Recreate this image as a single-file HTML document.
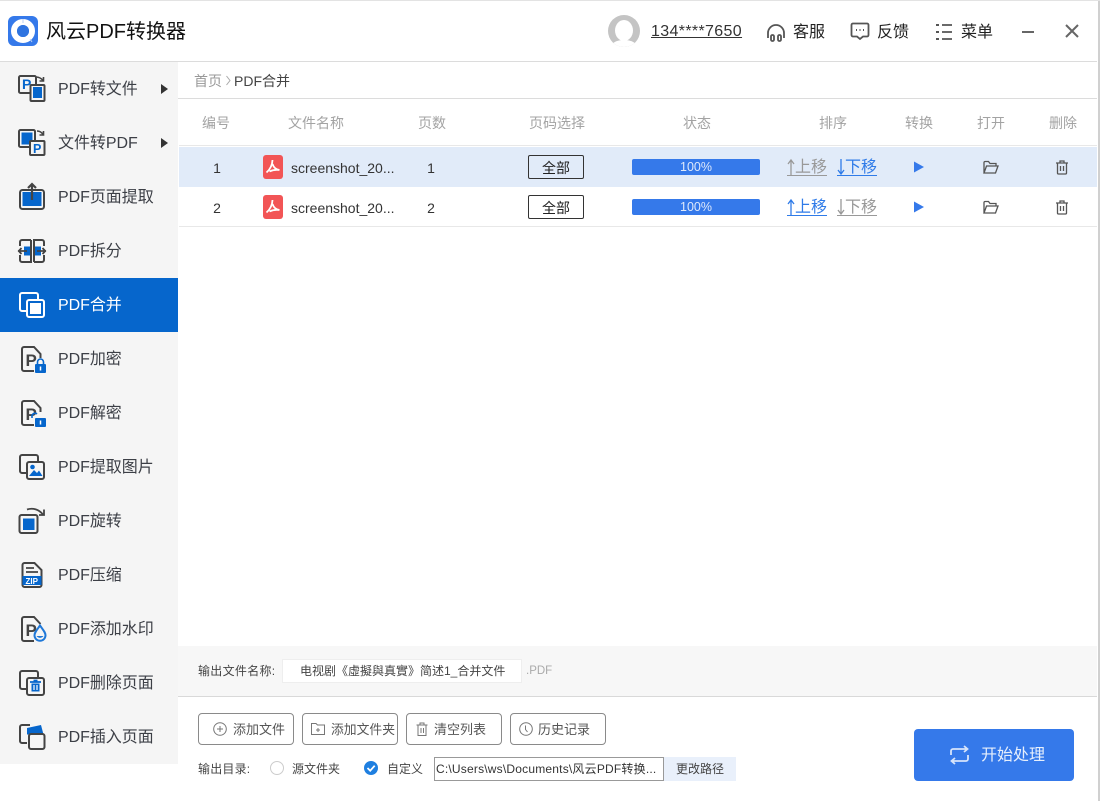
<!DOCTYPE html>
<html lang="zh"><head><meta charset="utf-8"><title>风云PDF转换器</title>
<style>
html,body{margin:0;padding:0;background:#fff}
#app{position:relative;width:1100px;height:801px;overflow:hidden;background:#fff;font-family:"Liberation Sans","Noto Sans CJK SC",sans-serif;color:#333}
.a{position:absolute}
.t{position:absolute;white-space:nowrap;line-height:20px}
.c{text-align:center}
svg{position:absolute;overflow:visible;fill:none}
.si{font-size:16px;color:#3c3f46;left:58px;letter-spacing:-.05px}
.h{font-size:14px;color:#a3a3a3;top:113px;text-align:center}
.mv{font-size:16px}
.gr{color:#999}.bl{color:#2f7be8}
.ul{position:absolute;width:40px;height:1px}
.bgr{background:#999}.bbl{background:#2f7be8}
.bar{position:absolute;left:632px;width:128px;height:16px;background:#3579ea;border-radius:2px;color:#dfe9fb;font-size:12.5px;line-height:17px;text-align:center}
.all{position:absolute;left:528px;width:54px;height:22px;border:1px solid #333;border-radius:2px;font-size:14px;line-height:25px;text-align:center;color:#222}
.btn{position:absolute;top:713px;width:94px;height:30px;border:1px solid #8a8a8a;border-radius:4px}
.bt{font-size:13px;color:#555;top:720px}
</style></head><body><div id="app">

<div class="a" style="left:0;top:0;width:1100px;height:1px;background:#e3e3e3"></div>
<div class="a" style="left:0;top:61px;width:1097px;height:1px;background:#dcdcdc"></div>

<!-- logo -->
<div class="a" style="left:8px;top:16px;width:30px;height:30px;border-radius:6px;background:#3579ea"></div>
<svg style="left:8px;top:16px" width="30" height="30"><circle cx="15" cy="15" r="9" stroke="#fff" stroke-width="6"/><circle cx="15" cy="15" r="6" fill="#2f74e0"/><path d="M15 3v4M22 23l2 3" stroke="#b8d0f6" stroke-width="1"/></svg>
<div class="t" style="left:46px;top:20px;font-size:20px;line-height:25px;color:#111">风云PDF转换器</div>

<!-- header right -->
<div class="a" style="left:608px;top:15px;width:32px;height:32px;border-radius:50%;background:#c4c4c4;overflow:hidden">
<div class="a" style="left:7px;top:5px;width:18px;height:21px;border-radius:50%;background:#fff"></div>
<div class="a" style="left:3px;top:25px;width:26px;height:14px;border-radius:50%;background:#fff"></div></div>
<div class="t" style="left:651px;top:22px;font-size:16px;letter-spacing:.35px;color:#333;text-decoration:underline">134****7650</div>
<svg style="left:766px;top:23px" width="20" height="20" stroke="#555" stroke-width="1.800"><path d="M2 15V10a8 8 0 0 1 16 0v5"/><rect x="5" y="12" width="3" height="6" rx="1.400"/><rect x="12" y="12" width="3" height="6" rx="1.400"/></svg>
<div class="t" style="left:793px;top:23px;font-size:16px;color:#222">客服</div>
<svg style="left:850px;top:22px" width="20" height="20" stroke="#555" stroke-width="1.800"><path d="M3 1.500h14a1.500 1.500 0 0 1 1.500 1.500v10a1.500 1.500 0 0 1-1.500 1.500h-4l-3 2.500-3-2.500H3A1.500 1.500 0 0 1 1.500 13V3A1.500 1.500 0 0 1 3 1.500z"/><path d="M6 8h1M9.500 8h1M13 8h1" stroke-width="2"/></svg>
<div class="t" style="left:877px;top:23px;font-size:16px;color:#222">反馈</div>
<svg style="left:936px;top:24px" width="16" height="16" stroke="#555" stroke-width="2"><path d="M0 1h3M0 8h3M0 15h3"/><path d="M6 1h10M6 8h10M6 15h10" stroke-width="1.800"/></svg>
<div class="t" style="left:961px;top:23px;font-size:16px;color:#222">菜单</div>
<div class="a" style="left:1022px;top:31px;width:12px;height:2px;background:#666"></div>
<svg style="left:1066px;top:25px" width="12" height="12" stroke="#666" stroke-width="2"><path d="M0 0l12 12M12 0L0 12"/></svg>

<!-- sidebar -->
<div class="a" style="left:0;top:62px;width:178px;height:702px;background:#f5f5f5"></div>
<div class="a" style="left:0;top:278px;width:178px;height:54px;background:#0666cc"></div>

<div class="t si" style="top:80px">PDF转文件</div>
<div class="t si" style="top:134px">文件转PDF</div>
<div class="t si" style="top:188px">PDF页面提取</div>
<div class="t si" style="top:242px">PDF拆分</div>
<div class="t si" style="top:296px;color:#fff">PDF合并</div>
<div class="t si" style="top:350px">PDF加密</div>
<div class="t si" style="top:404px">PDF解密</div>
<div class="t si" style="top:458px">PDF提取图片</div>
<div class="t si" style="top:512px">PDF旋转</div>
<div class="t si" style="top:566px">PDF压缩</div>
<div class="t si" style="top:620px">PDF添加水印</div>
<div class="t si" style="top:674px">PDF删除页面</div>
<div class="t si" style="top:728px">PDF插入页面</div>

<svg style="left:161px;top:84px" width="7" height="10"><path d="M0 0l7 5-7 5z" fill="#333"/></svg>
<svg style="left:161px;top:138px" width="7" height="10"><path d="M0 0l7 5-7 5z" fill="#333"/></svg>

<!-- sidebar icons -->
<svg style="left:18px;top:74px" width="28" height="28" stroke="#444" stroke-width="2">
<rect x="1" y="2" width="17" height="17" rx="1.500"/>
<text x="4" y="15" font-family="Liberation Sans" font-size="14" font-weight="bold" fill="#0666cc" stroke="none">P</text>
<rect x="12.500" y="11" width="14" height="16" rx="1" fill="#f5f5f5"/><rect x="15" y="13" width="9" height="11" fill="#0666cc" stroke="none"/>
<path d="M18 3c2.500 0 5 1 7 3.500M25.500 3v4h-4" stroke-width="1.600"/></svg>
<svg style="left:18px;top:128px" width="28" height="28" stroke="#444" stroke-width="2">
<rect x="1" y="2" width="16" height="17" rx="1.500"/><rect x="3.500" y="4.500" width="11" height="12" fill="#0666cc" stroke="none"/>
<path d="M19 3c2.500 0 4.500 1 6 3.500M25.500 3v4h-4" stroke-width="1.600"/>
<rect x="12" y="13" width="14.500" height="14" rx="1" fill="#f5f5f5"/>
<text x="15" y="25" font-family="Liberation Sans" font-size="12.500" font-weight="bold" fill="#0666cc" stroke="none">P</text></svg>
<svg style="left:19px;top:183px" width="26" height="27" stroke="#444" stroke-width="2"><rect x="1" y="7" width="24" height="19" rx="2.500"/><rect x="3.500" y="9" width="19" height="14" fill="#0666cc" stroke="none"/><path d="M13 17V1M9 5L13 1l4 4" stroke-width="2.200"/></svg>
<svg style="left:18px;top:239px" width="28" height="24" stroke="#444" stroke-width="2"><path d="M13 1H4a2 2 0 0 0-2 2v4M2 16v5a2 2 0 0 0 2 2h9V1M16 23h8a2 2 0 0 0 2-2v-5M26 7V3a2 2 0 0 0-2-2h-8v22"/><rect x="6" y="7.500" width="6" height="9" fill="#0666cc" stroke="none"/><rect x="17" y="7.500" width="6" height="9" fill="#0666cc" stroke="none"/><path d="M0 12h9M3.500 9L.8 12l2.700 3M19 12h9M24.500 9l2.700 3-2.700 3" stroke-width="1.800"/></svg>
<svg style="left:19px;top:292px" width="26" height="26" stroke="#fff" stroke-width="2"><path d="M7 19H3a2 2 0 0 1-2-2V3a2 2 0 0 1 2-2h14a2 2 0 0 1 2 2v4"/><rect x="8" y="8" width="17" height="17" rx="2"/><rect x="11" y="11" width="11" height="11" fill="#fff" stroke="none"/></svg>
<svg style="left:21px;top:346px" width="26" height="28" stroke="#444" stroke-width="2"><path d="M13 25H3a2 2 0 0 1-2-2V3a2 2 0 0 1 2-2h10l6.500 7v4"/><text x="4.500" y="20" font-family="Liberation Sans" font-size="17" font-weight="bold" fill="#444" stroke="none">P</text><rect x="14" y="18" width="11" height="9" rx="1" fill="#0666cc" stroke="none"/><path d="M16.500 18v-2a3 3 0 0 1 6 0v2" stroke="#0666cc" stroke-width="1.600"/><path d="M19.500 20.500v4" stroke="#fff" stroke-width="1.500"/></svg>
<svg style="left:21px;top:400px" width="26" height="28" stroke="#444" stroke-width="2"><path d="M13 25H3a2 2 0 0 1-2-2V3a2 2 0 0 1 2-2h10l6.500 7v4"/><text x="4.500" y="20" font-family="Liberation Sans" font-size="17" font-weight="bold" fill="#444" stroke="none">P</text><rect x="14" y="18" width="11" height="9" rx="1" fill="#0666cc" stroke="none"/><path d="M11 18v-2a3 3 0 0 1 5-2" stroke="#0666cc" stroke-width="1.600"/><path d="M19.500 20.500v4" stroke="#fff" stroke-width="1.500"/></svg>
<svg style="left:19px;top:454px" width="26" height="26" stroke="#444" stroke-width="2"><path d="M7 19H3a2 2 0 0 1-2-2V3a2 2 0 0 1 2-2h14a2 2 0 0 1 2 2v4"/><rect x="8" y="8" width="17" height="17" rx="2" fill="#f5f5f5"/><circle cx="13.500" cy="13" r="2.300" fill="#0666cc" stroke="none"/><path d="M10 22l5-6 3 3 2-2.500 3.500 5.500z" fill="#0666cc" stroke="none"/></svg>
<svg style="left:18px;top:507px" width="28" height="28" stroke="#444" stroke-width="2"><rect x="1.500" y="8" width="18" height="18" rx="2"/><rect x="5" y="11.500" width="11.500" height="11.500" fill="#0666cc" stroke="none"/><path d="M9 2.500c6-2 12 0 16 5M26 2.500v5.500h-5" stroke-width="1.800"/></svg>
<svg style="left:21px;top:562px" width="23" height="26" stroke="#444" stroke-width="2"><path d="M1.500 3a2 2 0 0 1 2-2h10l7 7v15a2 2 0 0 1-2 2h-15a2 2 0 0 1-2-2z"/><path d="M5 6h8M5 10h12" stroke-width="1.700"/><rect x="1.500" y="14" width="19" height="9" fill="#0666cc" stroke="none"/><text x="4.500" y="21.800" font-family="Liberation Sans" font-size="8" font-weight="bold" fill="#fff" stroke="none">ZIP</text></svg>
<svg style="left:21px;top:616px" width="26" height="28" stroke="#444" stroke-width="2"><path d="M13 25H3a2 2 0 0 1-2-2V3a2 2 0 0 1 2-2h10l6.500 7"/><text x="4.500" y="20" font-family="Liberation Sans" font-size="17" font-weight="bold" fill="#444" stroke="none">P</text><path d="M19 9.500c3.500 5 5.500 7 5.500 9.800a5.500 5.500 0 0 1-11 0c0-2.800 2-4.800 5.500-9.800z" fill="#f5f5f5" stroke="#1f78d8"/><path d="M15.500 20c2 2.500 5 2.500 7 0z" fill="#1f78d8" stroke="none"/></svg>
<svg style="left:19px;top:670px" width="26" height="26" stroke="#444" stroke-width="2"><path d="M7 19H3a2 2 0 0 1-2-2V3a2 2 0 0 1 2-2h14a2 2 0 0 1 2 2v4"/><rect x="8" y="8" width="17" height="17" rx="2" fill="#f5f5f5"/><path d="M11 12h11M14.500 10.500h4" stroke="#0666cc" stroke-width="1.800"/><path d="M12.500 13.500h8v8h-8z" fill="#0666cc" stroke="none"/><path d="M15 15v5M18 15v5" stroke="#fff" stroke-width="1.200"/></svg>
<svg style="left:19px;top:724px" width="26" height="26" stroke="#444" stroke-width="2"><path d="M8 19H3a2 2 0 0 1-2-2V3a2 2 0 0 1 2-2h8"/><path d="M8 4l14-3 2.500 9.500H8z" fill="#0666cc" stroke="none"/><rect x="10" y="10" width="15.500" height="15" rx="2" fill="#f5f5f5"/></svg>

<!-- breadcrumb -->
<div class="t" style="left:194px;top:71px;font-size:14px;color:#999">首页</div>
<svg style="left:226px;top:76px" width="5" height="9" stroke="#aaa"><path d="M.5 0l3.500 4.500L.5 9"/></svg>
<div class="t" style="left:234px;top:71px;font-size:14px;color:#444">PDF合并</div>
<div class="a" style="left:178px;top:98px;width:919px;height:1px;background:#dcdcdc"></div>

<!-- table headers -->
<div class="t h" style="left:202px">编号</div>
<div class="t h" style="left:288px">文件名称</div>
<div class="t h" style="left:418px">页数</div>
<div class="t h" style="left:529px">页码选择</div>
<div class="t h" style="left:683px">状态</div>
<div class="t h" style="left:819px">排序</div>
<div class="t h" style="left:905px">转换</div>
<div class="t h" style="left:977px">打开</div>
<div class="t h" style="left:1049px">删除</div>
<div class="a" style="left:179px;top:145px;width:918px;height:1px;background:#e8e8e8"></div>

<!-- rows -->
<div class="a" style="left:179px;top:147px;width:918px;height:40px;background:#e1ebf9"></div>
<div class="a" style="left:179px;top:226px;width:918px;height:1px;background:#e8e8e8"></div>

<div class="t c" style="left:207px;width:20px;top:158px;font-size:14px">1</div>
<div class="t c" style="left:207px;width:20px;top:198px;font-size:14px">2</div>

<div class="a" style="left:263px;top:155px;width:20px;height:24px;border-radius:3px;background:#f25556"></div>
<svg style="left:263px;top:155px" width="20" height="24" stroke="#fff" stroke-width="1.800"><path d="M9.500 5c-.2 4.500-2 9-6 12.500M9.500 9c1 3 3 5.500 7 6-3.500-.5-7 0-10 1.500"/></svg>
<div class="a" style="left:263px;top:195px;width:20px;height:24px;border-radius:3px;background:#f25556"></div>
<svg style="left:263px;top:195px" width="20" height="24" stroke="#fff" stroke-width="1.800"><path d="M9.500 5c-.2 4.500-2 9-6 12.500M9.500 9c1 3 3 5.500 7 6-3.500-.5-7 0-10 1.500"/></svg>
<div class="t" style="left:291px;top:158px;font-size:14px;color:#333">screenshot_20...</div>
<div class="t" style="left:291px;top:198px;font-size:14px;color:#333">screenshot_20...</div>
<div class="t c" style="left:421px;width:20px;top:158px;font-size:14px">1</div>
<div class="t c" style="left:421px;width:20px;top:198px;font-size:14px">2</div>

<div class="all" style="top:155px">全部</div>
<div class="all" style="top:195px">全部</div>
<div class="bar" style="top:159px">100%</div>
<div class="bar" style="top:199px">100%</div>

<!-- move links -->
<svg style="left:787px;top:159px" width="8" height="16" stroke="#999" stroke-width="1.300"><path d="M4 1v15M1 5l3-4 3 4"/></svg>
<div class="t mv gr" style="left:795px;top:158px">上移</div><div class="ul bgr" style="left:787px;top:175px"></div>
<svg style="left:837px;top:159px" width="8" height="16" stroke="#2f7be8" stroke-width="1.300"><path d="M4 0v15M1 11l3 4 3-4"/></svg>
<div class="t mv bl" style="left:845px;top:158px">下移</div><div class="ul bbl" style="left:837px;top:175px"></div>
<svg style="left:787px;top:199px" width="8" height="16" stroke="#2f7be8" stroke-width="1.300"><path d="M4 1v15M1 5l3-4 3 4"/></svg>
<div class="t mv bl" style="left:795px;top:198px">上移</div><div class="ul bbl" style="left:787px;top:215px"></div>
<svg style="left:837px;top:199px" width="8" height="16" stroke="#999" stroke-width="1.300"><path d="M4 0v15M1 11l3 4 3-4"/></svg>
<div class="t mv gr" style="left:845px;top:198px">下移</div><div class="ul bgr" style="left:837px;top:215px"></div>

<svg style="left:914px;top:161px" width="10" height="12"><path d="M0 .5l10 5.500-10 5.500z" fill="#3579ea"/></svg>
<svg style="left:914px;top:201px" width="10" height="12"><path d="M0 .5l10 5.500-10 5.500z" fill="#3579ea"/></svg>
<svg style="left:983px;top:160px" width="16" height="15" stroke="#555" stroke-width="1.300"><path d="M1 13V2.500A1 1 0 0 1 2 1.500h3.500l1.500 2h6v2.500M1 13l2.500-7h11.500l-2.500 7z"/></svg>
<svg style="left:983px;top:200px" width="16" height="15" stroke="#555" stroke-width="1.300"><path d="M1 13V2.500A1 1 0 0 1 2 1.500h3.500l1.500 2h6v2.500M1 13l2.500-7h11.500l-2.500 7z"/></svg>
<svg style="left:1055px;top:160px" width="14" height="15" stroke="#555" stroke-width="1.300"><path d="M1 3h12M5 3V1h4v2M2.500 3v10a1 1 0 0 0 1 1h7a1 1 0 0 0 1-1V3M5.500 6v5M8.500 6v5"/></svg>
<svg style="left:1055px;top:200px" width="14" height="15" stroke="#555" stroke-width="1.300"><path d="M1 3h12M5 3V1h4v2M2.500 3v10a1 1 0 0 0 1 1h7a1 1 0 0 0 1-1V3M5.500 6v5M8.500 6v5"/></svg>

<!-- output name -->
<div class="a" style="left:178px;top:646px;width:919px;height:50px;background:#f7f7f7"></div>
<div class="a" style="left:178px;top:696px;width:919px;height:1px;background:#d9d9d9"></div>
<div class="t" style="left:198px;top:661px;font-size:12px;letter-spacing:.3px;color:#444">输出文件名称:</div>
<div class="a" style="left:282px;top:659px;width:238px;height:22px;background:#fff;border:1px solid #eee"></div>
<div class="t" style="left:300px;top:661px;font-size:12px;color:#444">电视剧《虛擬與真實》简述1_合并文件</div>
<div class="t" style="left:526px;top:661px;font-size:11.5px;color:#aaa">.PDF</div>

<!-- buttons -->
<div class="btn" style="left:198px"></div>
<div class="btn" style="left:302px"></div>
<div class="btn" style="left:406px"></div>
<div class="btn" style="left:510px"></div>
<svg style="left:213px;top:722px" width="14" height="14" stroke="#777"><circle cx="7" cy="7" r="6.300"/><path d="M4 7h6M7 4v6"/></svg>
<div class="t bt" style="left:233px">添加文件</div>
<svg style="left:311px;top:722px" width="14" height="13" stroke="#777"><path d="M.5 1.500h4.500l1.500 1.500h7v9.500H.5zM5 8h4M7 6v4"/></svg>
<div class="t bt" style="left:331px;font-size:12.800px">添加文件夹</div>
<svg style="left:416px;top:722px" width="12" height="14" stroke="#777"><path d="M.5 3h11M4 3V1h4v2M2 3v10.500h8V3M5 6v5M7.500 6v5"/></svg>
<div class="t bt" style="left:434px">清空列表</div>
<svg style="left:519px;top:722px" width="14" height="14" stroke="#777"><circle cx="7" cy="7" r="6.300"/><path d="M6.500 3.500v4l2 2.500"/></svg>
<div class="t bt" style="left:538px">历史记录</div>

<!-- output dir -->
<div class="t" style="left:198px;top:759px;font-size:12px;letter-spacing:.2px;color:#444">输出目录:</div>
<div class="a" style="left:270px;top:761px;width:12px;height:12px;border:1px solid #ccc;border-radius:50%;background:#fff"></div>
<div class="t" style="left:292px;top:759px;font-size:12px;color:#444">源文件夹</div>
<div class="a" style="left:364px;top:761px;width:14px;height:14px;border-radius:50%;background:#1f7fe0"></div>
<svg style="left:364px;top:761px" width="14" height="14" stroke="#fff" stroke-width="1.800"><path d="M3.500 7l2.700 2.700 4.500-5"/></svg>
<div class="t" style="left:387px;top:759px;font-size:12px;color:#444">自定义</div>
<div class="a" style="left:434px;top:757px;width:228px;height:22px;border:1px solid #999;background:#fff"></div>
<div class="t" style="left:436px;top:759px;font-size:12px;color:#333;letter-spacing:.2px">C:\Users\ws\Documents\风云PDF转换...</div>
<div class="a" style="left:664px;top:757px;width:72px;height:24px;background:#e9f0fb;font-size:12px;line-height:25px;text-align:center;color:#444">更改路径</div>

<!-- start -->
<div class="a" style="left:914px;top:729px;width:160px;height:52px;border-radius:4px;background:#3579ea"></div>
<svg style="left:950px;top:746px" width="19" height="18" stroke="#d6e4fb" stroke-width="1.800"><path d="M1 9V5a2 2 0 0 1 2-2h14M14 0l3.500 3L14 6M18 9v4a2 2 0 0 1-2 2H2M5 12l-3.500 3L5 18"/></svg>
<div class="t" style="left:981px;top:746px;font-size:16px;color:#e6effc">开始处理</div>

<!-- right edge -->
<div class="a" style="left:1098px;top:1px;width:2px;height:800px;background:#d0d0d0"></div>
</div></body></html>
